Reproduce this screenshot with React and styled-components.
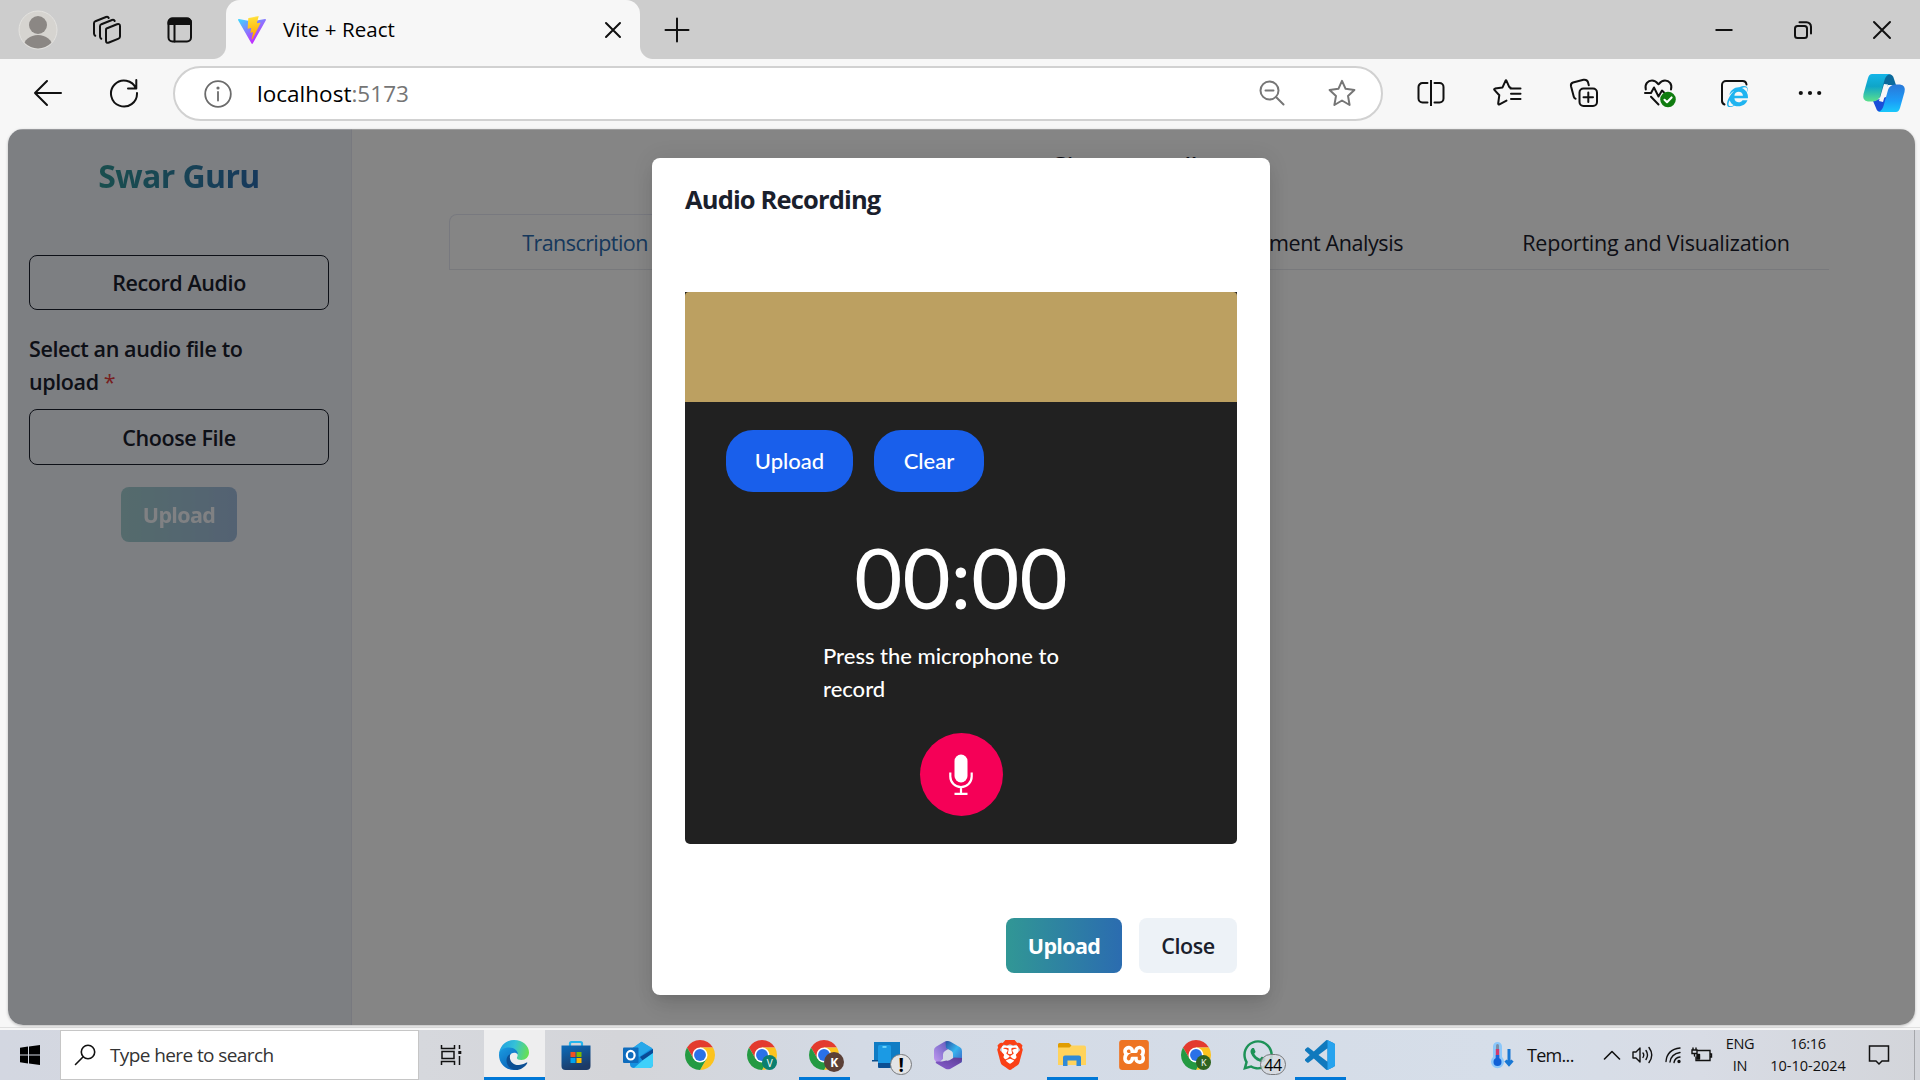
import React from "react";
import styled, { createGlobalStyle } from "styled-components";
import { FaInternetExplorer, FaWhatsapp } from "react-icons/fa";
import { SiBrave, SiXampp } from "react-icons/si";

const ui = `"Open Sans", "Noto Sans", "Liberation Sans", sans-serif`;

const GlobalStyle = createGlobalStyle`
  * { box-sizing: border-box; }
  body { margin: 0; background: #f7f7f7; font-family: ${ui}; overflow: hidden; }
  button { font-family: inherit; margin: 0; padding: 0; border: 0; background: none; }
  svg { display: block; flex: none; }
`;

const Screen = styled.div`
  width: 1920px;
  height: 1080px;
  display: flex;
  flex-direction: column;
  background: #f7f7f7;
`;

const Slot = styled.div`
  width: ${(p) => p.$w}px;
  height: 100%;
  flex: none;
  display: flex;
  align-items: center;
  justify-content: center;
  padding-right: ${(p) => p.$pr || 0}px;
`;

const Spacer = styled.div`
  flex: 1;
`;

const Label = styled.span`
  font-size: ${(p) => p.$size}px;
  font-weight: ${(p) => p.$weight || 400};
  letter-spacing: ${(p) => p.$ls || 0}px;
  color: ${(p) => p.$color || "inherit"};
  white-space: nowrap;
`;

/* ---------- browser chrome ---------- */

const TabStrip = styled.header`
  height: 59px;
  flex: none;
  display: flex;
  align-items: center;
  background: #cdcdcd;
`;

const BrowserTab = styled.div`
  position: relative;
  width: 414px;
  height: 59px;
  margin-left: 4px;
  padding: 0 18px 0 12px;
  display: flex;
  align-items: center;
  background: #f7f7f7;
  border-radius: 14px 14px 0 0;
  &::before,
  &::after {
    content: "";
    position: absolute;
    bottom: 0;
    width: 13px;
    height: 13px;
  }
  &::before {
    left: -13px;
    background: radial-gradient(circle at 0 0, #cdcdcd 12.5px, #f7f7f7 13.5px);
  }
  &::after {
    right: -13px;
    background: radial-gradient(circle at 100% 0, #cdcdcd 12.5px, #f7f7f7 13.5px);
  }
`;

const TabTitle = styled.div`
  flex: 1;
  padding-left: 17px;
  line-height: 28px;
`;

const Toolbar = styled.nav`
  height: 70px;
  flex: none;
  display: flex;
  align-items: center;
  padding-bottom: 1px;
  background: #f7f7f7;
  & ${Slot} {
    padding-bottom: 2px;
  }
`;

const AddressBar = styled.div`
  width: 1210px;
  height: 55px;
  margin: 0 10px 0 21px;
  padding: 0 5px 0 29px;
  display: flex;
  align-items: center;
  border: 2px solid #d1d1d1;
  border-radius: 28px;
  background: #fff;
`;

const Url = styled.div`
  flex: 1;
  padding-left: 25px;
  font-size: 22.5px;
  line-height: 32px;
`;

/* ---------- page ---------- */

const Page = styled.main`
  position: relative;
  height: 896px;
  margin: 0 5px 0 8px;
  flex: none;
  display: flex;
  overflow: hidden;
  border-radius: 15px;
  background: #fff;
  box-shadow: 0 1px 3px rgba(0, 0, 0, 0.25);
`;

const Sidebar = styled.aside`
  width: 344px;
  padding: 22px 22px 0 21px;
  display: flex;
  flex-direction: column;
  background: #f0f3fa;
  border-right: 1px solid #e6e8f3;
  color: #1a202c;
`;

const Brand = styled.h1`
  align-self: center;
  margin: 0 0 54px;
  font-size: 32px;
  line-height: 50px;
  height: 50px;
  font-weight: 700;
  letter-spacing: -0.6px;
  color: transparent;
  background: linear-gradient(to right, #319795, #2b6cb0);
  -webkit-background-clip: text;
  background-clip: text;
`;

const OutlineButton = styled.button`
  height: ${(p) => p.$h}px;
  margin-top: ${(p) => p.$mt || 0}px;
  border: 1px solid #1a202c;
  border-radius: 8px;
  color: #1a202c;
`;

const FieldLabel = styled.div`
  margin-top: 22px;
  height: 66px;
  font-size: 21.5px;
  line-height: 33px;
`;

const GradientButton = styled.button`
  width: 116px;
  height: 55px;
  border-radius: 8px;
  color: #fff;
  background: linear-gradient(to right, #319795, #2b6cb0);
  opacity: ${(p) => (p.$disabled ? 0.4 : 1)};
  align-self: center;
  margin-top: ${(p) => p.$mt || 0}px;
`;

const Content = styled.section`
  flex: 1;
  padding: 19px 86px 0 97px;
  display: flex;
  flex-direction: column;
  color: #1a202c;
`;

const Heading = styled.div`
  height: 66px;
  line-height: 33px;
  padding-left: 602px;
`;

const TabList = styled.div`
  display: grid;
  grid-template-columns: 272px 420px 342px 346px;
  height: 56px;
  border-bottom: 1px solid #e6e8ee;
`;

const TabItem = styled.div`
  display: flex;
  align-items: center;
  justify-content: center;
  padding-top: 1px;
  color: ${(p) => (p.$active ? "#2b6cb0" : "#1a202c")};
  border: 1px solid ${(p) => (p.$active ? "#e6e8f3" : "transparent")};
  border-bottom: 0;
  border-radius: 8px 8px 0 0;
`;

const Backdrop = styled.div`
  position: absolute;
  inset: 0;
  display: flex;
  justify-content: center;
  align-items: flex-start;
  padding-top: 29px;
  background: rgba(0, 0, 0, 0.48);
  box-shadow: inset 0 1px 0 rgba(255, 255, 255, 0.2);
`;

const Modal = styled.div`
  width: 618px;
  height: 837px;
  margin-right: 1px;
  padding: 20px 33px 22px;
  display: flex;
  flex-direction: column;
  border-radius: 8px;
  background: #fff;
  color: #1a202c;
  box-shadow: 0 14px 20px -4px rgba(0, 0, 0, 0.1), 0 5px 9px -3px rgba(0, 0, 0, 0.05),
    0 0 22px rgba(0, 0, 0, 0.08);
`;

const ModalTitle = styled.div`
  height: 114px;
  line-height: 42px;
`;

const Recorder = styled.div`
  height: 552px;
  display: flex;
  flex-direction: column;
  border-radius: 0 0 5px 5px;
  background: #212121;
  color: #fff;
  font-family: Lato, ${ui};
`;

const Banner = styled.div`
  height: 110px;
  flex: none;
  border-radius: 4px 4px 0 0;
  background: #bca061;
`;

const PillRow = styled.div`
  display: flex;
  gap: 21px;
  padding: 28px 0 0 41px;
`;

const Pill = styled.button`
  width: ${(p) => p.$w}px;
  height: 62px;
  padding-bottom: 2px;
  border-radius: 27px;
  background: #195feb;
  color: #fff;
`;

const Timer = styled.div`
  height: 136px;
  padding-top: 29px;
  text-align: center;
  font-size: 83px;
  line-height: 112px;
`;

const Hint = styled.p`
  width: 276px;
  margin: 11px auto 0;
  font-size: 22px;
  font-weight: 500;
  line-height: 33px;
`;

const MicButton = styled.button`
  width: 83px;
  height: 83px;
  margin: 28px auto 0;
  border-radius: 50%;
  background: #f50057;
  display: flex;
  align-items: center;
  justify-content: center;
`;

const ModalFooter = styled.div`
  flex: 1;
  display: flex;
  justify-content: flex-end;
  align-items: flex-end;
  gap: 17px;
  & > * {
    align-self: flex-end;
  }
`;

const CloseButton = styled.button`
  width: 98px;
  height: 55px;
  border-radius: 8px;
  background: #edf2f7;
  color: #1a202c;
`;

const FrameEdge = styled.div`
  height: 5px;
  flex: none;
  border-top: 2px solid transparent;
  background: linear-gradient(#f7f7f7 2px, #dfdfdf 2px, #dfdfdf 3px, #f7f7f7 3px);
  background-origin: border-box;
`;

/* ---------- taskbar ---------- */

const Taskbar = styled.footer`
  height: 50px;
  flex: none;
  display: flex;
  align-items: center;
  background: linear-gradient(90deg, #d3d7e1 0, #d6d8dd 420px, #d4d5d9 620px, #d3dae5 860px, #d6dee9 1500px, #d8dce5 1700px, #d3d5da 1920px);
`;

const SearchBox = styled.div`
  width: 359px;
  height: 50px;
  padding-left: 13px;
  display: flex;
  align-items: center;
  gap: 14px;
  background: #fff;
  border: 1px solid #c6c6c6;
`;

const AppTile = styled.div`
  position: relative;
  width: ${(p) => (p.$active ? 61 : 62)}px;
  height: 50px;
  flex: none;
  display: flex;
  align-items: center;
  justify-content: center;
  padding-right: 1px;
  background: ${(p) => (p.$active ? "#eeeeef" : "transparent")};
  &::after {
    content: "";
    position: absolute;
    bottom: 0;
    left: ${(p) => (p.$active ? 0 : 6)}px;
    width: ${(p) => (p.$active ? 61 : 51)}px;
    height: 3px;
    background: ${(p) => (p.$open ? "#0078d7" : "transparent")};
  }
`;

const Badge = styled.span`
  position: absolute;
  left: ${(p) => p.$x}px;
  top: ${(p) => p.$y}px;
  width: ${(p) => p.$w}px;
  height: ${(p) => p.$h}px;
  display: flex;
  align-items: center;
  justify-content: center;
  border-radius: 11px;
  border: ${(p) => (p.$outline ? "1px solid #77797c" : "0")};
  background: ${(p) => p.$bg};
  color: ${(p) => p.$fg || "#fff"};
  font-size: ${(p) => p.$size}px;
  font-weight: ${(p) => p.$weight || 400};
  letter-spacing: -0.3px;
  z-index: 1;
`;

const Tray = styled.div`
  flex: 1;
  height: 50px;
  padding-left: 139px;
  display: flex;
  align-items: center;
  color: #111;
`;

const TrayText = styled.div`
  width: 60px;
  padding-left: 13px;
  line-height: 26px;
`;

const Stack = styled.div`
  width: ${(p) => p.$w}px;
  display: flex;
  flex-direction: column;
  align-items: center;
  line-height: 22px;
  padding-bottom: ${(p) => p.$pb || 0}px;
`;

const ShowDesktop = styled.div`
  height: 50px;
  width: 6px;
  margin-left: 9px;
  border-left: 1px solid #a5a7ab;
`;

/* ---------- icons ---------- */

const Line = ({ w = 28, h = w, vb = `0 0 ${w} ${h}`, sw = 2, c = "#111", children }) => (
  <svg width={w} height={h} viewBox={vb} fill="none" stroke={c} strokeWidth={sw} strokeLinecap="round" strokeLinejoin="round">
    {children}
  </svg>
);

const Avatar = () => (
  <svg width="40" height="40" viewBox="0 0 40 40">
    <defs>
      <clipPath id="av"><circle cx="20" cy="20" r="18.5" /></clipPath>
    </defs>
    <circle cx="20" cy="20" r="19" fill="#d6d4d0" stroke="#e4e3e0" />
    <g clipPath="url(#av)" fill="#8b8784">
      <circle cx="20" cy="15" r="9" />
      <ellipse cx="20" cy="37" rx="14.5" ry="12" />
    </g>
  </svg>
);

const Workspaces = () => (
  <Line w={30}>
    <path d="M14.5 13.5 L25 9.3 Q28 8.3 28 11.2 V21.5 Q28 23 26.6 23.6 L17 27.5 Q14 28.7 14 25.7 V14.7 Q14 13.7 14.5 13.5Z" />
    <path d="M9.3 23.8 Q8 23 8 21.5 V11.3 Q8 9.8 9.4 9.2 L20 5 Q22 4.3 22.7 6" />
    <path d="M3.3 20.8 Q2 20 2 18.5 V8.3 Q2 6.8 3.4 6.2 L14 2 Q16 1.3 16.7 3" />
  </Line>
);

const TabActions = () => (
  <Line w={26} sw={2}>
    <rect x="1.5" y="1.5" width="22.5" height="23" rx="4" />
    <path d="M1.5 7V5.5a4 4 0 0 1 4-4H20a4 4 0 0 1 4 4V7z" fill="#111" />
    <path d="M7.5 8V24.5" />
  </Line>
);

const ViteLogo = () => (
  <svg width="28" height="28" viewBox="0 0 256 257">
    <defs>
      <linearGradient id="v1" x1="0" x2=".58" y1=".08" y2=".84"><stop stopColor="#41D1FF" /><stop offset="1" stopColor="#BD34FE" /></linearGradient>
      <linearGradient id="v2" x1=".43" x2=".5" y1=".02" y2=".89"><stop stopColor="#FFEA83" /><stop offset=".08" stopColor="#FFDD35" /><stop offset="1" stopColor="#FFA800" /></linearGradient>
    </defs>
    <path fill="url(#v1)" d="M255.153 37.938L134.897 252.976c-2.483 4.44-8.862 4.466-11.382.048L.875 37.958c-2.746-4.814 1.371-10.646 6.827-9.67l120.385 21.517a6.537 6.537 0 0 0 2.322-.004l117.867-21.483c5.438-.991 9.574 4.796 6.877 9.62Z" />
    <path fill="url(#v2)" d="M185.432.063L96.44 17.501a3.268 3.268 0 0 0-2.634 3.014l-5.474 92.456a3.268 3.268 0 0 0 3.997 3.378l24.777-5.718c2.318-.535 4.413 1.507 3.936 3.838l-7.361 36.047c-.495 2.426 1.782 4.5 4.151 3.78l15.304-4.649c2.372-.72 4.652 1.36 4.15 3.788l-11.698 56.621c-.732 3.542 3.979 5.473 5.943 2.437l1.313-2.028l72.516-144.72c1.215-2.423-.88-5.186-3.54-4.672l-25.505 4.922c-2.396.462-4.435-1.77-3.759-4.114l16.646-57.705c.677-2.35-1.37-4.583-3.769-4.113Z" />
  </svg>
);

const STAR = "M14 1.8 L17.6 9.8 L26.4 10.9 L20 16.9 L21.6 26 L14 21.5 L6.4 26 L8 16.9 L1.6 10.9 L10.4 9.8 Z";

const SplitScreen = () => (
  <Line w={28}>
    <path d="M14 1V27" strokeLinecap="butt" />
    <path d="M10.5 4H5.5A4 4 0 0 0 1.5 8V19.5A4 4 0 0 0 5.5 23.5H10.5M17.5 4H22.5A4 4 0 0 1 26.5 8V19.5A4 4 0 0 1 22.5 23.5H17.5" />
  </Line>
);

const Favorites = () => (
  <Line w={30}>
    <path d="M18.5 9.5 L17.3 9.2 L14.5 2.8 Q14 1.8 13.5 2.8 L10.5 9.4 L3 10.6 Q1.5 11 2.6 12.1 L7.3 17.2 L6.2 25.5 Q6.2 27 7.5 26.3 L14.5 22.6" />
    <path d="M18.5 10.5H28.5M19 15.7H28.5M19 20.9H28.5" />
  </Line>
);

const Collections = () => (
  <Line w={30}>
    <rect x="10.5" y="10.5" width="17.5" height="17.5" rx="4" />
    <path d="M19.3 14.5V24M14.5 19.3H24" />
    <path d="M6.6 20.8 Q5.2 20.5 4.8 18.8 L2 8.2 Q1.4 5.4 4 4.5 L14.5 1.8 Q18 1.3 19 4.2 L19.8 7.2" />
  </Line>
);

const Essentials = () => (
  <svg width="34" height="30" viewBox="0 0 34 30" fill="none" stroke="#111" strokeWidth="2" strokeLinejoin="round" strokeLinecap="round">
    <path d="M2.8 11.5C1.5 6 5 2.5 9 2.5C12 2.5 14 4.5 15.5 6.3C17 4.5 19 2.5 22 2.5C26 2.5 29.5 6 28 11.5" />
    <path d="M2 15H8L11 9.5L15.5 18.5L19 12.5L21 14.5M8 18.8L15.5 26.5" />
    <circle cx="25" cy="21.5" r="7.8" fill="#107c10" stroke="none" />
    <path d="M21.5 21.8L24 24.2L28.6 19.4" stroke="#fff" strokeWidth="2.1" />
  </svg>
);

const IeWrap = styled.div`
  position: relative;
  width: 28px;
  height: 28px;
  svg + svg {
    position: absolute;
    right: 0;
    bottom: 0;
  }
`;

const IeMode = () => (
  <IeWrap>
    <Line w={28}>
      <path d="M26.5 5.5A4 4 0 0 0 22.5 2H6A4 4 0 0 0 2 6V21.5A4 4 0 0 0 4.5 25.5" />
    </Line>
    <FaInternetExplorer size={21} color="#20b4f0" />
  </IeWrap>
);

const Copilot = () => (
  <svg width="44" height="40" viewBox="0 0 44 40">
    <defs>
      <linearGradient id="cp1" x1="0" y1="0" x2="0" y2="1"><stop stopColor="#14b5e8" /><stop offset=".45" stopColor="#0fa5c8" /><stop offset="1" stopColor="#5be08c" /></linearGradient>
      <linearGradient id="cp2" x1="0" y1="0" x2="0" y2="1"><stop stopColor="#2a78d8" /><stop offset=".6" stopColor="#1c9cf8" /><stop offset="1" stopColor="#19c8fb" /></linearGradient>
    </defs>
    <path d="M10 1H26Q31 1 32 6L34 12H26L18 26Z" fill="#0b6a9c" />
    <path d="M11 28L14 35Q15 39 19 39H28L24 24Z" fill="#1a4fd8" />
    <path d="M22 11L26 11.5L21 29L17 28Z" fill="#f7f7f7" />
    <path d="M10 1H28Q24 2 22.5 7L18 23Q16.5 28 11 28.5H6Q0 28 1.5 21L6 5Q7.2 1 10 1Z" fill="url(#cp1)" />
    <path d="M34 39H16Q20 38 21.5 33L26 17Q27.5 12 33 11.5H38Q44 12 42.5 19L38 35Q36.8 39 34 39Z" fill="url(#cp2)" />
  </svg>
);

const Mic = () => (
  <svg width="24" height="42" viewBox="0 0 24 42" fill="none" stroke="#fff" strokeWidth="2.2">
    <rect x="5.5" y="0.5" width="13" height="28" rx="6.5" fill="#fff" stroke="none" />
    <path d="M1.3 18.5V22.5A10.7 10.7 0 0 0 22.7 22.5V18.5M12 33V40M5.5 39.9H18.5" />
  </svg>
);

const WindowsLogo = () => (
  <svg width="20" height="20" viewBox="0 0 20 20" fill="#000">
    <path d="M0 2.7L8 1.5V9.5H0zM9 1.4L20 0V9.5H9zM0 10.5H8V18.5L0 17.3zM9 10.5H20V20L9 18.6z" />
  </svg>
);

const TaskView = () => (
  <Line w={22} h={20} sw={1.5} c="#111">
    <path strokeLinecap="butt" strokeLinejoin="miter" d="M1.5 0V3.5H14.5V0M1.5 20V16.5H14.5V20M2 6.5H14V13.5H2zM19.5 0V4M19.5 11V20" />
    <rect x="18.3" y="6" width="3" height="3" fill="#111" stroke="none" />
  </Line>
);

const Edge = () => (
  <svg width="30" height="30" viewBox="0 0 30 30">
    <defs>
      <linearGradient id="e1" x1="0" x2="1" y1=".3" y2=".5"><stop stopColor="#1f9fe0" /><stop offset=".5" stopColor="#35c1d8" /><stop offset="1" stopColor="#66e053" /></linearGradient>
      <linearGradient id="e2" x1="0" y1="0" x2=".6" y2="1"><stop stopColor="#1b9de2" /><stop offset="1" stopColor="#0a63b8" /></linearGradient>
    </defs>
    <path d="M0 14C1 5 7.5 0 15 0C24 0 30 6 30 12.5C30 17 26.5 20 22.5 20C19 20 17.5 18.8 18 17.5C19.5 15 18.5 11 14 10C8 8.5 2.5 10 0 14Z" fill="url(#e1)" />
    <path d="M0 15C0 10 5 7.5 10 7.5C15.5 7.5 19 11 19 14.5C17 12 12 12 10.5 16C8.5 21.5 13 27.5 19 28.5C17.5 29.5 16 30 15 30C6.5 30 0 23.5 0 15Z" fill="url(#e2)" />
    <path d="M11.5 14C9 20 14 25.5 20 25C23.5 24.7 26 23.3 27.5 22.5C28.2 22.2 28.5 22.7 28.2 23.2C26 27 21.5 30 17 30C11 29.5 7.5 25 7.5 20.5C7.5 17.5 9 15 11.5 14Z" fill="#0c4f94" />
  </svg>
);

const Store = () => (
  <svg width="30" height="30" viewBox="0 0 30 30">
    <defs><linearGradient id="st" x1="0" y1="0" x2=".4" y2="1"><stop stopColor="#0a6cbc" /><stop offset="1" stopColor="#1d3a66" /></linearGradient></defs>
    <path d="M9 7V3.5A1.5 1.5 0 0 1 10.5 2H19.5A1.5 1.5 0 0 1 21 3.5V7" fill="none" stroke="#25b6ee" strokeWidth="2.2" />
    <path d="M.5 5.5H29.5V26A4 4 0 0 1 25.5 30H4.5A4 4 0 0 1 .5 26Z" fill="url(#st)" />
    <path fill="#f25022" d="M9.5 12h5v5h-5z" /><path fill="#7fba00" d="M15.5 12h5v5h-5z" /><path fill="#00a4ef" d="M9.5 18h5v5h-5z" /><path fill="#ffb900" d="M15.5 18h5v5h-5z" />
  </svg>
);

const Outlook = () => (
  <svg width="30" height="28" viewBox="0 0 30 28">
    <path d="M7 9L18.5 .8L30 8V23Q30 27 26 27H11Q7 27 7 23Z" fill="#1490df" />
    <path d="M9 7.5L18.5 .8L29 7L16 16Z" fill="#28a8ea" />
    <path d="M17 16L30 8V14L20 20Z" fill="#0a4a96" />
    <path d="M30 12V23Q30 27 26 27H11L20 19Z" fill="#3fd0fa" />
    <rect x="0" y="6.5" width="15.5" height="15.5" rx="1" fill="#0f6cbd" />
    <ellipse cx="7.7" cy="14.2" rx="3.9" ry="4.3" fill="none" stroke="#fff" strokeWidth="2.2" />
  </svg>
);

const Chrome = () => (
  <svg width="30" height="30" viewBox="2 2 44 44">
    <path fill="#e33b2e" d="M24 13H43.05A22 22 0 0 0 4.95 13L14.47 29.5L24 24z" />
    <path fill="#fcc31e" d="M24 13H43.05A22 22 0 0 1 24 46L33.53 29.5L24 24z" />
    <path fill="#249a42" d="M4.95 13A22 22 0 0 0 24 46L33.53 29.5L24 24L14.47 29.5z" />
    <circle cx="24" cy="24" r="11" fill="#fff" />
    <circle cx="24" cy="24" r="8.7" fill="#2a71e8" />
  </svg>
);

const PhoneLink = () => (
  <svg width="30" height="30" viewBox="0 0 30 30">
    <path d="M3 2H29V20H3z" fill="#0f7cc4" />
    <path d="M1 20H31V21.5H1z" fill="#0a4e8c" />
    <rect x="7" y="5" width="13" height="23" rx="1.5" fill="#1b9ae4" />
    <path d="M7 23H20V26.5A1.5 1.5 0 0 1 18.5 28H8.5A1.5 1.5 0 0 1 7 26.5Z" fill="#0b4f93" />
    <rect x="11.5" y="6.2" width="4" height="1.5" fill="#7fe2ff" />
  </svg>
);

const M365 = () => (
  <svg width="28" height="30" viewBox="0 0 28 30">
    <defs>
      <linearGradient id="m1" x1="0" y1="1" x2="1" y2="0"><stop stopColor="#c39af2" /><stop offset="1" stopColor="#5a55b8" /></linearGradient>
      <linearGradient id="m2" x1="0" y1="0" x2="1" y2="1"><stop stopColor="#2a4fa0" /><stop offset=".5" stopColor="#36b4ee" /><stop offset="1" stopColor="#3c62c4" /></linearGradient>
      <linearGradient id="m3" x1="0" y1="1" x2="1" y2="0"><stop stopColor="#8a5fd0" /><stop offset="1" stopColor="#5a3c96" /></linearGradient>
    </defs>
    <path d="M13.5 1L16 3V8L11 11Q9 12.2 9 14.5V19L4.500 23L1.500 21Q0 20 0 18V10Q0 8 2 6.800L10.500 1.800Q12 1 13.500 1Z" fill="url(#m1)" />
    <path d="M11.500 1.400Q14 .3 16.500 1.700L26 7.200Q28 8.500 28 11V20Q28 22 27 23L19 18V14Q19 12 17.500 11L12 8Z" fill="url(#m2)" />
    <path d="M2 21.500H8L12.500 20.500Q14 21 15.500 20.200L20 17.500L28 18V19.500Q28 22 26 23.200L16.500 28.700Q14 30 11.500 28.700L2.500 23.500Q1 22.500 2 21.500Z" fill="url(#m3)" />
  </svg>
);

const IconWell = styled.div`
  display: flex;
  align-items: center;
  justify-content: center;
  width: 30px;
  height: 30px;
  background: ${(p) => p.$bg || "transparent"};
  background-clip: content-box;
  padding: ${(p) => p.$pad || "0"};
  border-radius: 3px;
`;

const Explorer = () => (
  <svg width="28" height="24" viewBox="0 0 28 24">
    <path d="M0 1.5A1.5 1.5 0 0 1 1.5 0H11L13.5 2.5V8H0z" fill="#e09d00" />
    <path d="M0 4.5H11.5L13.5 2.5H26A2 2 0 0 1 28 4.5V22H0z" fill="#ffd35c" />
    <path d="M5 23V14.5A2 2 0 0 1 7 12.5H21A2 2 0 0 1 23 14.5V23H18.5V17.5H9.5V23z" fill="#2f8ad8" />
  </svg>
);

const VsCode = () => (
  <svg width="30" height="30" viewBox="0 0 24 24">
    <path fill="#1079bd" d="M23.15 2.587L18.21.21a1.494 1.494 0 0 0-1.705.29l-9.46 8.63-4.12-3.128a.999.999 0 0 0-1.276.057L.327 7.261A1 1 0 0 0 .326 8.74L3.899 12 .326 15.26a1 1 0 0 0 .001 1.479L1.65 17.94a.999.999 0 0 0 1.276.057l4.12-3.128 9.46 8.63a1.492 1.492 0 0 0 1.704.29l4.942-2.377A1.5 1.5 0 0 0 24 20.06V3.939a1.5 1.5 0 0 0-.85-1.352zm-5.146 14.861L10.826 12l7.178-5.448v10.896z" />
    <path fill="#27a3ee" d="M18 .15L23.15 2.587A1.5 1.5 0 0 1 24 3.94V20.06A1.5 1.5 0 0 1 23.15 21.4L18 23.9Z" />
  </svg>
);

const Thermometer = () => (
  <svg width="24" height="28" viewBox="0 0 24 28">
    <path d="M3 5.5A4.5 4.5 0 0 1 12 5.5V16A6.5 6.5 0 1 1 3 16Z" fill="#8cc8fb" />
    <path d="M6 4.5A1.5 1.5 0 0 1 9 4.5V10H6z" fill="#7c8fa8" />
    <path d="M5.8 8H9.2V19H5.8z" fill="#d13a6c" />
    <path d="M5.8 14H9.2V20H5.8z" fill="#1663d8" />
    <circle cx="7.5" cy="21" r="4" fill="#1160d6" />
    <path d="M19 8V23M15.5 19.5L19 23.5L22.5 19.5" fill="none" stroke="#1877d4" strokeWidth="3" />
  </svg>
);

const apps = [
  { id: "edge", icon: <Edge />, active: true, open: true },
  { id: "store", icon: <Store /> },
  { id: "outlook", icon: <Outlook /> },
  { id: "chrome", icon: <Chrome /> },
  { id: "chrome-v", icon: <Chrome />, badge: { text: "V", $x: 31, $y: 25, $w: 15, $h: 15, $bg: "#0b7f6f", $size: 10 } },
  { id: "chrome-k", icon: <Chrome />, open: true, badge: { text: "K", $x: 31, $y: 22, $w: 20, $h: 20, $bg: "#5b4037", $size: 12, $weight: 700 } },
  { id: "phone", icon: <PhoneLink />, badge: { text: "!", $x: 35, $y: 24, $w: 22, $h: 21, $bg: "#e3e4e6", $fg: "#000", $size: 19, $weight: 700, $outline: true } },
  { id: "m365", icon: <M365 /> },
  {
    id: "brave",
    icon: (
      <IconWell $bg="#fff" $pad="6px 7px">
        <SiBrave size={30} color="#fa4016" />
      </IconWell>
    ),
  },
  { id: "explorer", icon: <Explorer />, open: true },
  {
    id: "xampp",
    icon: (
      <IconWell $bg="#fff" $pad="4px">
        <SiXampp size={30} color="#ee7423" />
      </IconWell>
    ),
  },
  { id: "chrome-g", icon: <Chrome />, badge: { text: "K", $x: 31, $y: 25, $w: 15, $h: 15, $bg: "#2f6420", $size: 9 } },
  { id: "whatsapp", icon: <FaWhatsapp size={34} color="#1d9257" />, badge: { text: "44", $x: 33, $y: 24, $w: 26, $h: 21, $bg: "rgba(215,219,224,.85)", $fg: "#000", $size: 16, $outline: true } },
  { id: "vscode", icon: <VsCode />, open: true },
];

export default function App() {
  return (
    <>
      <GlobalStyle />
      <Screen>
        <TabStrip>
          <Slot $w={76}><Avatar /></Slot>
          <Slot $w={62}><Workspaces /></Slot>
          <Slot $w={84}><TabActions /></Slot>
          <BrowserTab>
            <ViteLogo />
            <TabTitle><Label $size={20.5} $ls={0.05}>Vite + React</Label></TabTitle>
            <Line w={18}><path d="M2 2L16 16M16 2L2 16" /></Line>
          </BrowserTab>
          <Slot $w={74}><Line w={26}><path d="M13 1.5V24.5M1.5 13H24.5" /></Line></Slot>
          <Spacer />
          <Slot $w={79} $pr={1}><Line w={18}><path strokeLinecap="butt" d="M.5 9H17.5" /></Line></Slot>
          <Slot $w={79} $pr={1}>
            <Line w={20}>
              <rect x="2" y="6" width="12" height="12" rx="2.5" />
              <path d="M6.5 2.2H13.5A4.5 4.5 0 0 1 18 6.7V13.5" />
            </Line>
          </Slot>
          <Slot $w={77}><Line w={20}><path d="M2 2L18 18M18 2L2 18" /></Line></Slot>
        </TabStrip>

        <Toolbar>
          <Slot $w={96}><Line w={30}><path d="M28 15H2M14 3L2 15L14 27" /></Line></Slot>
          <Slot $w={56}><Line w={30}><path d="M27 10.5A13 13 0 1 0 28 15M27.3 2V10.5H19" /></Line></Slot>
          <AddressBar>
            <Line w={28} c="#6b6b6b" sw={1.8}>
              <circle cx="14" cy="14" r="12.8" />
              <path d="M14 12V20.5" />
              <circle cx="14" cy="8" r=".7" fill="#6b6b6b" />
            </Line>
            <Url>
              <Label $size={22.5} $ls={0.02} $color="#000">localhost</Label>
              <Label $size={22.5} $ls={0.02} $color="#757575">:5173</Label>
            </Url>
            <Slot $w={70}>
              <Line w={26} c="#767676">
                <circle cx="10.5" cy="10.5" r="9" />
                <path d="M6.5 10.5H14.5M17 17L24.5 24.5" />
              </Line>
            </Slot>
            <Slot $w={69}><Line w={28} c="#767676"><path d={STAR} /></Line></Slot>
          </AddressBar>
          <Slot $w={76}><SplitScreen /></Slot>
          <Slot $w={76}><Favorites /></Slot>
          <Slot $w={77}><Collections /></Slot>
          <Slot $w={76}><Essentials /></Slot>
          <Slot $w={72}><IeMode /></Slot>
          <Slot $w={80}>
            <svg width="24" height="6" viewBox="0 0 24 6" fill="#111">
              <circle cx="2.8" cy="3" r="2.1" /><circle cx="12" cy="3" r="2.1" /><circle cx="21.2" cy="3" r="2.1" />
            </svg>
          </Slot>
          <Slot $w={70} $pr={2}><Copilot /></Slot>
        </Toolbar>

        <Page>
          <Sidebar>
            <Brand>Swar Guru</Brand>
            <OutlineButton $h={55}><Label $size={21.5} $weight={600} $ls={-0.4}>Record Audio</Label></OutlineButton>
            <FieldLabel>
              <Label $size={21.5} $weight={600} $ls={-0.4}>Select an audio file to</Label>
              <br />
              <Label $size={21.5} $weight={600} $ls={-0.4}>upload </Label>
              <Label $size={21.5} $color="#e53e3e">*</Label>
            </FieldLabel>
            <OutlineButton $h={56} $mt={11}><Label $size={21.5} $weight={600} $ls={-0.4}>Choose File</Label></OutlineButton>
            <GradientButton $disabled $mt={22}><Label $size={21.5} $weight={700} $ls={-0.65}>Upload</Label></GradientButton>
          </Sidebar>
          <Content>
            <Heading><Label $size={22} $weight={600}>Give me a call at</Label></Heading>
            <TabList>
              <TabItem $active><Label $size={21.5} $ls={-0.55}>Transcription</Label></TabItem>
              <TabItem />
              <TabItem><Label $size={21.5} $ls={-0.4}>Sentiment Analysis</Label></TabItem>
              <TabItem><Label $size={21.5} $ls={-0.22}>Reporting and Visualization</Label></TabItem>
            </TabList>
          </Content>
          <Backdrop>
            <Modal>
              <ModalTitle><Label $size={25.5} $weight={700} $ls={-0.85}>Audio Recording</Label></ModalTitle>
              <Recorder>
                <Banner />
                <PillRow>
                  <Pill $w={127}><Label $size={22} $weight={500}>Upload</Label></Pill>
                  <Pill $w={110}><Label $size={22} $weight={500}>Clear</Label></Pill>
                </PillRow>
                <Timer>00:00</Timer>
                <Hint>Press the microphone to record</Hint>
                <MicButton><Mic /></MicButton>
              </Recorder>
              <ModalFooter>
                <GradientButton><Label $size={21.5} $weight={700} $ls={-0.65}>Upload</Label></GradientButton>
                <CloseButton><Label $size={21.5} $weight={600} $ls={-0.4}>Close</Label></CloseButton>
              </ModalFooter>
            </Modal>
          </Backdrop>
        </Page>
        <FrameEdge />

        <Taskbar>
          <Slot $w={60}><WindowsLogo /></Slot>
          <SearchBox>
            <Line w={22} sw={1.6}><circle cx="14" cy="8" r="6.7" /><path d="M9.2 12.8L1.5 20.5" /></Line>
            <Label $size={19} $ls={-0.6} $color="#333">Type here to search</Label>
          </SearchBox>
          <Slot $w={65} $pr={2}><TaskView /></Slot>
          {apps.map((a) => (
            <AppTile key={a.id} $active={a.active} $open={a.open}>
              {a.icon}
              {a.badge && <Badge {...a.badge}>{a.badge.text}</Badge>}
            </AppTile>
          ))}
          <Tray>
            <Thermometer />
            <TrayText><Label $size={18} $ls={-0.7}>Tem...</Label></TrayText>
            <Slot $w={21} />
            <Slot $w={34}><Line w={18} h={10} sw={1.6}><path d="M1.5 9L9 1.5L16.5 9" /></Line></Slot>
            <Slot $w={28}>
              <Line w={22} h={20} sw={1.4}>
                <path d="M1 7H4L8 3V17L4 13H1zM11 8Q12.5 10 11 12.5M14 5.5Q17 10 14 14.5M17 2.5Q22.5 10 17 17.5" />
              </Line>
            </Slot>
            <Slot $w={31}>
              <Line w={18} h={18} sw={1.4}>
                <path d="M2 15.5Q3 3.5 16 2M6 16Q7 8 16 6.5M10 16.5Q11 11.5 16 11" />
                <circle cx="15" cy="15.5" r="1" fill="#111" />
              </Line>
            </Slot>
            <Slot $w={28}>
              <Line w={22} h={16} sw={1.4}>
                <path strokeLinejoin="miter" d="M7 3.5H19V13.5H5V10M19.8 7H20.5V10H19.8M1 3H6V6.5H1zM2 1V3M5 1V3M3.5 6.5V9" />
                <path d="M6 7.5H8.5V12H6z" fill="#111" />
              </Line>
            </Slot>
            <Stack $w={48}><Label $size={14.5} $ls={-0.3}>ENG</Label><Label $size={14.5} $ls={-0.3}>IN</Label></Stack>
            <Stack $w={88} $pb={1}><Label $size={14.5} $ls={-0.3}>16:16</Label><Label $size={14.5} $ls={0}>10-10-2024</Label></Stack>
            <Slot $w={53}><Line w={22} h={22} sw={1.5}><path strokeLinejoin="miter" d="M1.5 2H20.5V17H14L11 20L8 17H1.5z" /></Line></Slot>
            <ShowDesktop />
          </Tray>
        </Taskbar>
      </Screen>
    </>
  );
}
